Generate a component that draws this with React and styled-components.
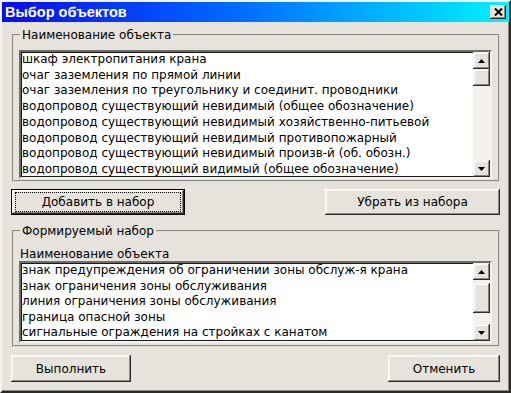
import React from "react";
import styled, { createGlobalStyle, css } from "styled-components";

const sourceItems = [
  "шкаф электропитания крана",
  "очаг заземления по прямой линии",
  "очаг заземления по треугольнику и соединит. проводники",
  "водопровод существующий невидимый (общее обозначение)",
  "водопровод существующий невидимый хозяйственно-питьевой",
  "водопровод существующий невидимый противопожарный",
  "водопровод существующий невидимый произв-й (об. обозн.)",
  "водопровод существующий видимый (общее обозначение)",
];

const setItems = [
  "знак предупреждения об ограничении зоны обслуж-я крана",
  "знак ограничения зоны обслуживания",
  "линия ограничения зоны обслуживания",
  "граница опасной зоны",
  "сигнальные ограждения на стройках с канатом",
];

const Arrow = ({ down }) => (
  <svg width="7" height="4" viewBox="0 0 7 4">
    <polygon points={down ? "0,0 7,0 3.5,4" : "0,4 7,4 3.5,0"} fill="#000" />
  </svg>
);

const CloseIcon = () => (
  <svg width="9" height="8" viewBox="0 0 9 8">
    <path d="M1 0.5 L8 7.5 M8 0.5 L1 7.5" stroke="#000" strokeWidth="2" />
  </svg>
);

const Scrollbar = ({ thumbTop, thumbHeight }) => (
  <ScrollTrack>
    <ScrollButton>
      <Arrow />
    </ScrollButton>
    <ThumbArea>
      <Thumb $top={thumbTop} $height={thumbHeight} />
    </ThumbArea>
    <ScrollButton>
      <Arrow down />
    </ScrollButton>
  </ScrollTrack>
);

const ListBox = ({ items, height, rowHeight, thumbTop, thumbHeight }) => (
  <List $height={height}>
    <Rows $rowHeight={rowHeight}>
      {items.map((item) => (
        <Row key={item}>{item}</Row>
      ))}
    </Rows>
    <Scrollbar thumbTop={thumbTop} thumbHeight={thumbHeight} />
  </List>
);

const App = () => {
  return (
    <>
      <GlobalStyle />
      <Window>
        <TitleBar>
          <Title>Выбор объектов</Title>
          <CloseButton>
            <CloseIcon />
          </CloseButton>
        </TitleBar>
        <Body>
          <GroupBox $bottom={1}>
            <Legend>Наименование объекта</Legend>
            <ListBox
              items={sourceItems}
              height={129}
              rowHeight={15.7}
              thumbTop={0}
              thumbHeight={17}
            />
          </GroupBox>
          <ButtonRow $top={7}>
            <Button $width={174} $default>
              <Label $focused>Добавить в набор</Label>
            </Button>
            <Button $width={175}>
              <Label>Убрать из набора</Label>
            </Button>
          </ButtonRow>
          <GroupBox $top={9}>
            <Legend>Формируемый набор</Legend>
            <Caption>Наименование объекта</Caption>
            <ListBox
              items={setItems}
              height={82}
              rowHeight={15.6}
              thumbTop={3}
              thumbHeight={30}
            />
          </GroupBox>
          <ButtonRow $top={8}>
            <Button $width={120} $height={27}>
              <Label>Выполнить</Label>
            </Button>
            <Button $width={112} $height={27}>
              <Label>Отменить</Label>
            </Button>
          </ButtonRow>
        </Body>
      </Window>
    </>
  );
};

const GlobalStyle = createGlobalStyle`
  body {
    margin: 0;
    background: #e5e3dc;
    font-family: "DejaVu Sans", sans-serif;
    font-size: 12px;
    color: #000;
  }
`;

const Window = styled.div`
  box-sizing: border-box;
  width: 511px;
  height: 393px;
  display: flex;
  flex-direction: column;
  background: #e5e3dc;
  border: 2px solid;
  border-color: #f4f3ef #2a2a2a #2a2a2a #f4f3ef;
  box-shadow: inset -1px -1px #8a8884;
`;

const TitleBar = styled.div`
  height: 20px;
  display: flex;
  align-items: center;
  justify-content: space-between;
  padding: 0 3px 0 3px;
  background: linear-gradient(to right, #0a0cf0 0%, #0068ff 45%, #00f4ff 100%);
`;

const Title = styled.div`
  font-family: "Liberation Sans", Arial, sans-serif;
  font-weight: bold;
  font-size: 14.5px;
  color: #fff;
`;

const CloseButton = styled.div`
  box-sizing: border-box;
  width: 16px;
  height: 14px;
  display: flex;
  align-items: center;
  justify-content: center;
  background: #e5e3dc;
  box-shadow: inset -1px -1px #2a2a2a, inset 1px 1px #fff,
    inset -2px -2px #8a8884;
`;

const Body = styled.div`
  flex: 1;
  display: flex;
  flex-direction: column;
  padding: 6px 9px 0 10px;
`;

const GroupBox = styled.fieldset`
  margin: ${(p) => p.$top || 0}px 0 0 0;
  padding: 8px 6px ${(p) => (p.$bottom === undefined ? 2 : p.$bottom)}px 5px;
  border: 2px groove #dedbd2;
  min-width: 0;
`;

const Legend = styled.legend`
  padding: 0 2px;
  margin-left: 1px;
  line-height: 14px;
`;

const Caption = styled.div`
  line-height: 14px;
  padding: 1px 0 0 1px;
`;

const List = styled.div`
  box-sizing: border-box;
  height: ${(p) => p.$height}px;
  display: flex;
  background: #fff;
  border: 2px solid;
  border-color: #6e6c68 #f4f3ef #f4f3ef #6e6c68;
  box-shadow: inset 1px 1px #1a1a1a, inset -1px -1px #1a1a1a;
  overflow: hidden;
`;

const Rows = styled.div`
  flex: 1;
  padding-left: 1px;
  line-height: ${(p) => p.$rowHeight}px;
  white-space: nowrap;
  overflow: hidden;
`;

const Row = styled.div``;

const ScrollTrack = styled.div`
  width: 17px;
  display: flex;
  flex-direction: column;
  background: #f2f1ec;
`;

const bevel = css`
  background: #e5e3dc;
  box-shadow: inset -1px -1px #2a2a2a, inset 1px 1px #f2f1ec,
    inset -2px -2px #8a8884, inset 2px 2px #fff;
`;

const ScrollButton = styled.div`
  height: 17px;
  display: flex;
  align-items: center;
  justify-content: center;
  ${bevel}
`;

const ThumbArea = styled.div`
  flex: 1;
  display: flex;
  flex-direction: column;
`;

const Thumb = styled.div`
  margin-top: ${(p) => p.$top}px;
  height: ${(p) => p.$height}px;
  ${bevel}
`;

const ButtonRow = styled.div`
  display: flex;
  justify-content: space-between;
  margin: ${(p) => p.$top}px 0 0 -1px;
`;

const Button = styled.div`
  box-sizing: border-box;
  width: ${(p) => p.$width}px;
  height: ${(p) => p.$height || 26}px;
  display: flex;
  padding: 3px 4px;
  background: #e5e3dc;
  box-shadow: inset -1px -1px #2a2a2a, inset 1px 1px #fff,
    inset -2px -2px #8a8884, inset 2px 2px #f2f1ec;
  ${(p) =>
    p.$default &&
    css`
      border: 1px solid #000;
      padding: 2px 3px;
    `}
`;

const Label = styled.div`
  flex: 1;
  display: flex;
  align-items: center;
  justify-content: center;
  border: 1px dotted ${(p) => (p.$focused ? "#000" : "transparent")};
`;

export default App;
